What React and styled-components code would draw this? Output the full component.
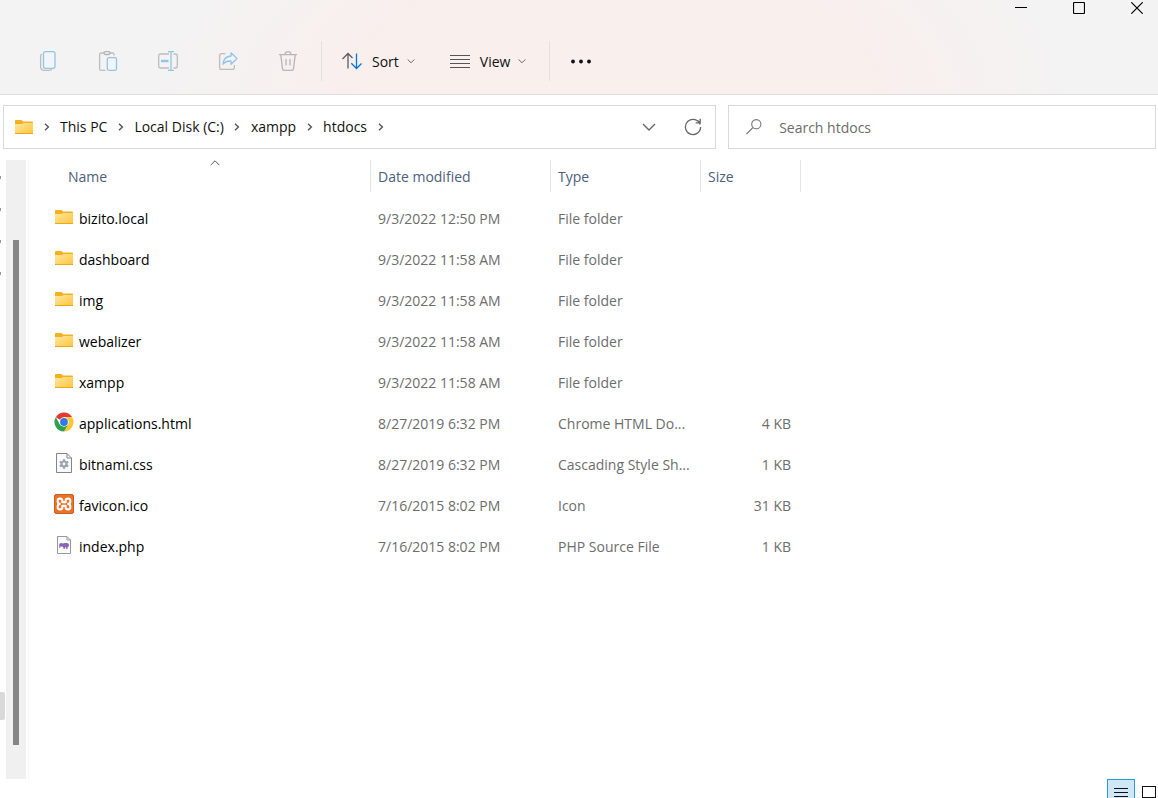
import React from "react";
import styled, { createGlobalStyle } from "styled-components";

const crumbs = ["This PC", "Local Disk (C:)", "xampp", "htdocs"];

const files = [
  { name: "bizito.local", date: "9/3/2022 12:50 PM", type: "File folder", icon: FolderIcon },
  { name: "dashboard", date: "9/3/2022 11:58 AM", type: "File folder", icon: FolderIcon },
  { name: "img", date: "9/3/2022 11:58 AM", type: "File folder", icon: FolderIcon },
  { name: "webalizer", date: "9/3/2022 11:58 AM", type: "File folder", icon: FolderIcon },
  { name: "xampp", date: "9/3/2022 11:58 AM", type: "File folder", icon: FolderIcon },
  { name: "applications.html", date: "8/27/2019 6:32 PM", type: "Chrome HTML Do...", size: "4 KB", icon: ChromeIcon },
  { name: "bitnami.css", date: "8/27/2019 6:32 PM", type: "Cascading Style Sh...", size: "1 KB", icon: CssIcon },
  { name: "favicon.ico", date: "7/16/2015 8:02 PM", type: "Icon", size: "31 KB", icon: XamppIcon },
  { name: "index.php", date: "7/16/2015 8:02 PM", type: "PHP Source File", size: "1 KB", icon: PhpIcon },
];

export default function App() {
  return (
    <Shell>
      <GlobalStyle />
      <Header>
        <TitleBar>
          <WindowButton aria-label="Minimize">
            <MinimizeIcon />
          </WindowButton>
          <WindowButton aria-label="Maximize">
            <MaximizeIcon />
          </WindowButton>
          <WindowButton aria-label="Close">
            <CloseIcon />
          </WindowButton>
        </TitleBar>
        <Toolbar>
          <ToolButton aria-label="Copy" disabled>
            <CopyIcon />
          </ToolButton>
          <ToolButton aria-label="Paste" disabled>
            <PasteIcon />
          </ToolButton>
          <ToolButton aria-label="Rename" disabled>
            <RenameIcon />
          </ToolButton>
          <ToolButton aria-label="Share" disabled>
            <ShareIcon />
          </ToolButton>
          <ToolButton aria-label="Delete" disabled>
            <TrashIcon />
          </ToolButton>
          <Divider />
          <MenuGroup>
            <MenuButton>
              <SortIcon />
              <MenuLabel>Sort</MenuLabel>
              <SmallChevron />
            </MenuButton>
            <MenuButton>
              <LinesIcon />
              <MenuLabel>View</MenuLabel>
              <SmallChevron />
            </MenuButton>
          </MenuGroup>
          <Divider />
          <ToolButton aria-label="See more">
            <DotsIcon />
          </ToolButton>
        </Toolbar>
      </Header>

      <AddressRow>
        <AddressBar aria-label="Address">
          <FolderIcon />
          {crumbs.map((crumb) => (
            <React.Fragment key={crumb}>
              <CrumbArrow />
              <Crumb href="#">{crumb}</Crumb>
            </React.Fragment>
          ))}
          <CrumbArrow />
          <AddressActions>
            <IconButton aria-label="Previous locations">
              <DownIcon />
            </IconButton>
            <IconButton aria-label="Refresh">
              <RefreshIcon />
            </IconButton>
          </AddressActions>
        </AddressBar>
        <SearchBox>
          <SearchIcon />
          <SearchInput aria-label="Search htdocs" placeholder="Search htdocs" />
        </SearchBox>
      </AddressRow>

      <Body>
        <NavPane>
          <PinList>
            <Pin />
            <Pin />
            <Pin />
            <Pin />
          </PinList>
          <NavSelection />
        </NavPane>
        <ScrollTrack>
          <ScrollThumb />
        </ScrollTrack>
        <Content>
          <FileTable>
            <colgroup>
              <Col $width={341} />
              <Col $width={180} />
              <Col $width={150} />
              <Col $width={101} />
            </colgroup>
            <thead>
              <tr>
                <HeadCell>
                  <HeadButton $first>
                    <SortMark>
                      <UpIcon />
                    </SortMark>
                    Name
                  </HeadButton>
                </HeadCell>
                <HeadCell>
                  <HeadButton>Date modified</HeadButton>
                </HeadCell>
                <HeadCell>
                  <HeadButton>Type</HeadButton>
                </HeadCell>
                <HeadCell>
                  <HeadButton $last>Size</HeadButton>
                </HeadCell>
              </tr>
            </thead>
            <tbody>
              {files.map((file) => (
                <tr key={file.name}>
                  <Cell>
                    <FileName>
                      <IconSlot>
                        <file.icon />
                      </IconSlot>
                      {file.name}
                    </FileName>
                  </Cell>
                  <Cell>{file.date}</Cell>
                  <Cell>{file.type}</Cell>
                  <Cell $right>{file.size}</Cell>
                </tr>
              ))}
            </tbody>
          </FileTable>
        </Content>
      </Body>

      <StatusBar>
        <ViewButton aria-label="Details view" $active>
          <DetailsIcon />
        </ViewButton>
        <ViewButton aria-label="Large icons view">
          <ThumbIcon />
        </ViewButton>
      </StatusBar>
    </Shell>
  );
}

function MinimizeIcon() {
  return (
    <svg width="12" height="12" viewBox="0 0 12 12">
      <path d="M0 5.5h12" stroke="#000" />
    </svg>
  );
}

function MaximizeIcon() {
  return (
    <svg width="12" height="12" viewBox="0 0 12 12" fill="none">
      <rect x=".5" y=".5" width="11" height="11" rx="1" stroke="#000" strokeWidth="1.2" />
    </svg>
  );
}

function CloseIcon() {
  return (
    <svg width="12" height="12" viewBox="0 0 12 12">
      <path d="M.3.3l11.4 11.4M11.7.3L.3 11.7" stroke="#000" strokeWidth="1.2" />
    </svg>
  );
}

function CopyIcon() {
  return (
    <svg width="20" height="20" viewBox="0 0 20 20" fill="none" strokeWidth="1.3">
      <path d="M4 3.2c-1 .3-1.4 1-1.4 2v10.3c0 2.3 1.3 3.8 3.6 3.8h5.2c1.2 0 2-.4 2.3-1.3" stroke="#bdbdbd" />
      <rect x="5.5" y=".7" width="11.5" height="16.6" rx="2" fill="#eff5f9" stroke="#93c3e8" />
    </svg>
  );
}

function PasteIcon() {
  return (
    <svg width="20" height="20" viewBox="0 0 20 20" fill="none" strokeWidth="1.3">
      <path d="M7.5 19.3H3.2c-1 0-1.6-.6-1.6-1.6V3.6c0-1 .6-1.6 1.6-1.6H6M12 2h2.4c1 0 1.6.6 1.6 1.6v1" stroke="#bdbdbd" />
      <rect x="6" y=".7" width="6" height="2.8" rx="1.4" stroke="#b3b3b3" />
      <rect x="9.3" y="6.7" width="9.2" height="12.6" rx="1.5" fill="#eff5f9" stroke="#93c3e8" />
    </svg>
  );
}

function RenameIcon() {
  return (
    <svg width="20" height="20" viewBox="0 0 20 20" fill="none" strokeWidth="1.3">
      <path d="M11 3H2.5C1.3 3 .7 3.8.7 4.8v10.4c0 1 .6 1.8 1.8 1.8H11M15.5 3h1.7c1.3 0 2.1.8 2.1 2v10c0 1.2-.8 2-2.1 2h-1.7" stroke="#bdbdbd" />
      <path d="M10 .7h6M10 19.3h6M13 .7v18.6" stroke="#93c3e8" />
      <path d="M3 10h7.5" stroke="#93c3e8" strokeWidth="2.4" />
    </svg>
  );
}

function ShareIcon() {
  return (
    <svg width="20" height="20" viewBox="0 0 20 20" fill="none" strokeWidth="1.3" strokeLinejoin="round">
      <path d="M7.5 2.6H3.8c-1.4 0-2.2.8-2.2 2.2v11.4c0 1.4.8 2.2 2.2 2.2h10.4c1.4 0 2.2-.8 2.2-2.2V14" stroke="#bdbdbd" />
      <path d="M13 1.8l6 5.7-6 5.7V10c-3.5-.2-6 .8-8 3.2.3-4.8 3-7.8 8-8.2z" fill="#eff5f9" stroke="#93c3e8" />
    </svg>
  );
}

function TrashIcon() {
  return (
    <svg width="20" height="20" viewBox="0 0 20 20" fill="none" stroke="#b9b6b5" strokeWidth="1.3">
      <path d="M1 3.6h18M7 3.4C7.2 1.6 8.4.7 10 .7s2.8.9 3 2.7M2.8 3.8L4.5 17.6c.1 1 .8 1.7 1.8 1.7h7.4c1 0 1.7-.7 1.8-1.7L17.2 3.8M8 8v6.5M12 8v6.5" />
    </svg>
  );
}

function SortIcon() {
  return (
    <svg width="20" height="20" viewBox="0 0 20 20" fill="none" strokeWidth="1.3">
      <path d="M6 17.5V2.7M.5 8L6 2.5 10.5 7" stroke="#5c5c5c" />
      <path d="M14.5 2.5v14.8M9.3 12.3l5.2 5.2 5-5" stroke="#0078d4" />
    </svg>
  );
}

function LinesIcon() {
  return (
    <svg width="20" height="20" viewBox="0 0 20 20" stroke="#555" strokeWidth="1.2">
      <path d="M0 4.5h20M0 8.500h20M0 12.500h20M0 16.500h20" />
    </svg>
  );
}

function SmallChevron() {
  return (
    <svg width="8" height="8" viewBox="0 0 8 8" fill="none">
      <path d="M.7 2.5L4 5.8 7.3 2.5" stroke="#666" />
    </svg>
  );
}

function DotsIcon() {
  return (
    <svg width="20" height="20" viewBox="0 0 20 20" fill="#111">
      <circle cx="2" cy="10.5" r="1.9" />
      <circle cx="10" cy="10.5" r="1.9" />
      <circle cx="18" cy="10.5" r="1.9" />
    </svg>
  );
}

function CrumbArrow() {
  return (
    <ArrowSlot>
      <svg width="6" height="8" viewBox="0 0 6 8" fill="none">
        <path d="M1 .8L4.4 4 1 7.2" stroke="#555" strokeWidth="1.4" />
      </svg>
    </ArrowSlot>
  );
}

function DownIcon() {
  return (
    <svg width="14" height="8" viewBox="0 0 14 8" fill="none">
      <path d="M1 1l6 6 6-6" stroke="#666" strokeWidth="1.4" />
    </svg>
  );
}

function UpIcon() {
  return (
    <svg width="10" height="6" viewBox="0 0 10 6" fill="none">
      <path d="M.6 5.2L5 .8l4.4 4.4" stroke="#555" />
    </svg>
  );
}

function RefreshIcon() {
  return (
    <svg width="18" height="18" viewBox="0 0 18 18" fill="none" stroke="#666" strokeWidth="1.3">
      <path d="M16.2 6.5A7.6 7.6 0 1 0 16.6 9M16.2.8V4.8H11.8M16 4.6L14 2.8" />
    </svg>
  );
}

function SearchIcon() {
  return (
    <svg width="16" height="16" viewBox="0 0 16 16" fill="none" stroke="#777" strokeWidth="1.1">
      <circle cx="10.3" cy="5.2" r="4.6" />
      <path d="M7 8.5L.5 15" />
    </svg>
  );
}

function FolderIcon() {
  return (
    <svg width="18" height="14" viewBox="0 0 18 14">
      <defs>
        <linearGradient id="folder" x1="0" y1="0" x2="1" y2="1">
          <stop offset="0" stopColor="#ffe7a2" />
          <stop offset="1" stopColor="#fdc53a" />
        </linearGradient>
      </defs>
      <path d="M0 1q0-1 1-1h5.5L8 1.500h9q1 0 1 1V5H0z" fill="#f6b01e" />
      <path d="M0 4h7l1.5-1H18v11H0z" fill="url(#folder)" />
      <path d="M0 13.5h18" stroke="#eba81f" />
    </svg>
  );
}

function ChromeIcon() {
  return (
    <svg width="20" height="20" viewBox="0 0 20 20">
      <path d="M10 10L1.77 5.25A9.5 9.5 0 0 1 18.23 5.25H10z" fill="#e33b2e" />
      <path d="M10 5.25h8.23A9.5 9.5 0 0 1 10 19.5l4.11-7.12z" fill="#fcc934" />
      <path d="M1.77 5.25A9.5 9.5 0 0 0 10 19.5l4.11-7.12L5.89 12.38z" fill="#2da14c" />
      <circle cx="10" cy="10" r="4.75" fill="#fff" />
      <circle cx="10" cy="10" r="3.9" fill="#3577e5" />
    </svg>
  );
}

function CssIcon() {
  return (
    <svg width="16" height="20" viewBox="0 0 16 20" fill="none">
      <path d="M.5.5H11L15.5 5v14.5H.5z" fill="#fafafa" stroke="#858585" />
      <path d="M11 .5V5h4.5" stroke="#858585" />
      <circle cx="8" cy="11" r="2.5" stroke="#9aa5af" strokeWidth="2.2" />
      <path d="M8 6.2v2M8 13.8v2M3.8 8.6l1.8 1M10.4 12.4l1.8 1M3.8 13.4l1.8-1M10.4 9.6l1.8-1" stroke="#9aa5af" strokeWidth="2.2" />
    </svg>
  );
}

function XamppIcon() {
  return (
    <svg width="20" height="20" viewBox="0 0 20 20" fill="none">
      <rect x=".5" y=".5" width="19" height="19" rx="1.5" fill="#ec7027" stroke="#c9601f" />
      <path
        d="M8.3 8.2V6.3C8.3 5.1 7.5 4.6 6.4 4.6H5.6C4.4 4.6 3.7 5.4 3.7 6.6V7.4C3.7 8.8 4.4 9.6 5.8 9.9 4.4 10.2 3.7 11 3.7 12.4V13.4C3.7 14.6 4.4 15.4 5.6 15.4H6.4C7.5 15.4 8.3 14.9 8.3 13.7V11.8H11.7V13.7C11.7 14.9 12.5 15.4 13.6 15.4H14.4C15.6 15.4 16.3 14.6 16.3 13.4V12.4C16.3 11 15.6 10.2 14.2 9.9 15.6 9.6 16.3 8.8 16.3 7.4V6.6C16.3 5.4 15.6 4.6 14.4 4.6H13.6C12.5 4.6 11.7 5.1 11.7 6.3V8.2Z"
        stroke="#fff"
        strokeWidth="2.1"
        strokeLinejoin="round"
      />
    </svg>
  );
}

function PhpIcon() {
  return (
    <svg width="14" height="18" viewBox="0 0 14 18" fill="none">
      <path d="M.5.5H10L13.5 4v13.5H.5z" fill="#fafafa" stroke="#999" />
      <path d="M10 .5V4h3.5" stroke="#999" />
      <path d="M2.2 11.8V9C2.2 7.6 3 6.9 4.3 6.9c.8 0 1.3.2 1.7.5.5-.3 1.2-.5 2-.5h1.7c1.5 0 2.3.8 2.3 2.3l-.5 1.5-.8.1V12.8H9v-1.5H8V12.8H6.3V11L4.5 10.4H3.3v1.4z" fill="#8a63b5" />
    </svg>
  );
}

function DetailsIcon() {
  return (
    <svg width="14" height="10" viewBox="0 0 14 10">
      <path d="M0 1.5h14M0 5.5h14M0 9.5h14" stroke="#111" />
    </svg>
  );
}

function ThumbIcon() {
  return (
    <svg width="14" height="12" viewBox="0 0 14 12">
      <rect x=".5" y=".5" width="13" height="11" fill="#fff" stroke="#111" />
    </svg>
  );
}

const GlobalStyle = createGlobalStyle`
  * {
    box-sizing: border-box;
  }
  body {
    margin: 0;
    background: #fff;
    font-family: "Open Sans", "Noto Sans", sans-serif;
    font-size: 14px;
    line-height: 20px;
    color: #111;
  }
  button,
  input {
    font: inherit;
    color: inherit;
    border: 0;
    padding: 0;
    background: none;
  }
  svg {
    display: block;
    flex-shrink: 0;
  }
`;

const Shell = styled.div`
  display: flex;
  flex-direction: column;
  height: 100vh;
  overflow: hidden;
`;

const Header = styled.header`
  flex-shrink: 0;
  border-bottom: 1px solid #e0dcdb;
  background: radial-gradient(ellipse 40% 250% at 53% 100%, #f9efed 54%, #f3f3f3 100%);
`;

const TitleBar = styled.div`
  display: flex;
  justify-content: flex-end;
  height: 28px;
  margin-right: -8px;
`;

const WindowButton = styled.button`
  display: flex;
  justify-content: center;
  width: 58px;
  padding-top: 2px;
`;

const Toolbar = styled.div`
  display: flex;
  align-items: center;
  height: 66px;
  padding-left: 18px;
`;

const ToolButton = styled.button`
  display: flex;
  align-items: center;
  justify-content: center;
  width: 60px;
  height: 40px;
`;

const Divider = styled.div`
  width: 1px;
  height: 40px;
  margin-left: 3px;
  background: #e6dfde;

  & + button {
    margin-left: 1px;
  }
`;

const MenuGroup = styled.div`
  display: flex;
  gap: 35px;
  padding: 0 20px;
`;

const MenuButton = styled.button`
  display: flex;
  align-items: center;
  gap: 8px;
  height: 40px;
`;

const MenuLabel = styled.span`
  padding: 2px 0 0 2px;
`;

const AddressRow = styled.div`
  display: grid;
  grid-template-columns: 5fr 3fr;
  flex-shrink: 0;
  gap: 12px;
  padding: 10px 2px 11px 3px;
`;

const AddressBar = styled.nav`
  display: flex;
  align-items: center;
  height: 44px;
  padding: 0 12px 0 11px;
  border: 1px solid #d9d9d9;
`;

const ArrowSlot = styled.span`
  display: flex;
  justify-content: center;
  width: 27px;
`;

const Crumb = styled.a`
  color: #111;
  text-decoration: none;
  white-space: nowrap;
`;

const AddressActions = styled.div`
  display: flex;
  gap: 24px;
  margin-left: auto;
`;

const IconButton = styled.button`
  display: flex;
  align-items: center;
  justify-content: center;
  width: 20px;
  height: 20px;
`;

const SearchBox = styled.label`
  display: flex;
  align-items: center;
  gap: 17px;
  height: 44px;
  padding: 0 17px;
  border: 1px solid #d9d9d9;
`;

const SearchInput = styled.input`
  flex: 1;
  min-width: 0;
  padding-top: 2px;
  outline: 0;

  &::placeholder {
    color: #6b6b6b;
    opacity: 1;
  }
`;

const Body = styled.main`
  display: flex;
  flex: 1;
  min-height: 0;
`;

const NavPane = styled.aside`
  display: flex;
  flex-direction: column;
  justify-content: space-between;
  width: 6px;
  padding: 16px 0 59px;
`;

const PinList = styled.div`
  display: flex;
  flex-direction: column;
  gap: 29px;
`;

const Pin = styled.div`
  width: 1px;
  height: 3px;
  background: #999;
`;

const NavSelection = styled.div`
  width: 5px;
  height: 28px;
  border-radius: 0 2px 2px 0;
  background: #d9d9d9;
`;

const ScrollTrack = styled.div`
  display: flex;
  width: 20px;
  padding: 80px 7px 34px;
  background: #f0f0f0;
`;

const ScrollThumb = styled.div`
  flex: 1;
  background: #858585;
`;

const Content = styled.section`
  flex: 1;
  margin-left: 2px;
  border-left: 1px solid #f5f5f5;
`;

const FileTable = styled.table`
  width: 772px;
  table-layout: fixed;
  border-collapse: collapse;
`;

const Col = styled.col`
  width: ${({ $width }) => $width}px;
`;

const HeadCell = styled.th`
  padding: 0 0 6px;
  font-weight: normal;
`;

const HeadButton = styled.button`
  position: relative;
  display: flex;
  align-items: center;
  width: ${({ $first }) => ($first ? "310px" : "100%")};
  height: 32px;
  margin-left: ${({ $first }) => ($first ? "31px" : "0")};
  padding-top: 2px;
  padding-left: ${({ $first }) => ($first ? "8px" : "7px")};
  border-left: ${({ $first }) => ($first ? "0" : "1px solid #e5e5e5")};
  border-right: ${({ $last }) => ($last ? "1px solid #e5e5e5" : "0")};
  color: #4c607a;
`;

const SortMark = styled.span`
  position: absolute;
  top: 0;
  left: 50%;
  transform: translateX(-50%);
`;

const Cell = styled.td`
  height: 41px;
  padding: 0 10px 0 8px;
  overflow: hidden;
  color: #6d6d6d;
  text-align: ${({ $right }) => ($right ? "right" : "left")};
  white-space: nowrap;

  &:first-child {
    padding-left: 25px;
  }
  &:nth-child(3) {
    padding-right: 0;
  }
`;

const FileName = styled.div`
  display: flex;
  align-items: center;
  gap: 5px;
  color: #000;
`;

const IconSlot = styled.span`
  display: flex;
  justify-content: center;
  width: 20px;
  padding-bottom: 3px;
`;

const StatusBar = styled.footer`
  display: flex;
  flex-shrink: 0;
  justify-content: flex-end;
  height: 19px;
  margin-right: -5px;
`;

const ViewButton = styled.button`
  display: flex;
  justify-content: center;
  width: 28px;
  height: 28px;
  padding-top: 7px;
  border: ${({ $active }) => ($active ? "1px solid #2a9bd6" : "0")};
  background: ${({ $active }) => ($active ? "#cfe8f7" : "none")};
`;
